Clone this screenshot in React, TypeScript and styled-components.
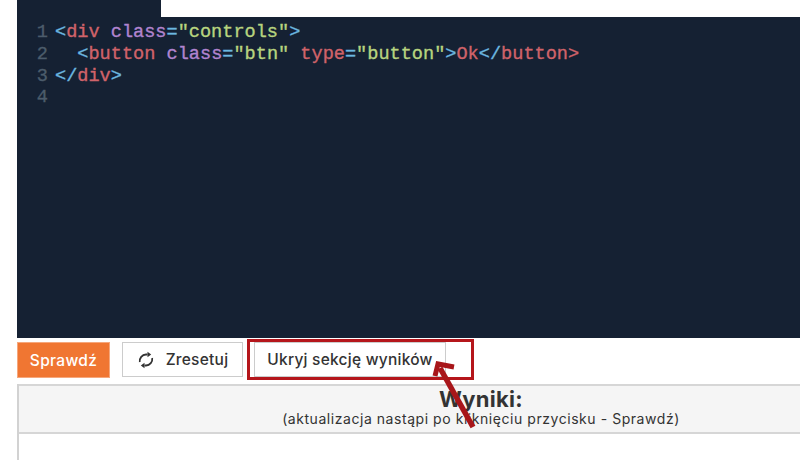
import styled, { createGlobalStyle } from 'styled-components';

const GlobalStyle = createGlobalStyle`
  html, body {
    margin: 0;
    padding: 0;
    background: #ffffff;
    overflow: hidden;
  }
`;

const Page = styled.div`
  position: relative;
  width: 800px;
  height: 460px;
  overflow: hidden;
  padding-left: 17px;
  box-sizing: border-box;
  font-family: "Inter", "Noto Sans", sans-serif;
`;

const Content = styled.div`
  width: 926px;
`;

const TabRow = styled.div`
  height: 17px;
`;

const Tab = styled.div`
  width: 144px;
  height: 17px;
  background: #152133;
`;

const Editor = styled.div`
  height: 321px;
  background: #152133;
  padding-top: 5px;
  box-sizing: border-box;
  font-family: "Liberation Mono", monospace;
  font-size: 18.58px;
  line-height: 21.8px;
  -webkit-text-stroke: 0.35px;
`;

const Line = styled.div`
  display: flex;
  height: 21.8px;
`;

const Gutter = styled.span`
  width: 38px;
  padding-right: 7px;
  box-sizing: border-box;
  text-align: right;
  color: #4c5c6b;
`;

const Code = styled.code`
  font: inherit;
  white-space: pre;
`;

const Tok = styled.span<{ $c: string }>`
  color: ${({ $c }) => $c};
`;

const Toolbar = styled.div`
  display: flex;
  align-items: flex-start;
  height: 46px;
  padding-top: 4px;
  box-sizing: border-box;
`;

const Primary = styled.button`
  width: 93px;
  height: 36px;
  margin-right: 12px;
  border: 1px solid #f6a77c;
  background: #f07632;
  color: #ffffff;
  font: 500 15.5px "Inter", sans-serif;
  letter-spacing: 0.3px;
  padding: 0;
`;

const Plain = styled.button<{ $w: number }>`
  display: flex;
  align-items: center;
  justify-content: center;
  gap: 11px;
  width: ${({ $w }) => $w}px;
  height: 35px;
  margin-right: 11px;
  border: 1px solid #cccccc;
  background: #ffffff;
  color: #333333;
  font: 450 15.5px "Inter", sans-serif;
  letter-spacing: 0.25px;
  padding: 0;
`;

const Results = styled.section`
  border-left: 2px solid #d2d2d2;
  height: 76px;
`;

const ResultsHeader = styled.header`
  height: 50px;
  box-sizing: border-box;
  border-top: 2px solid #d6d6d6;
  border-bottom: 2px solid #d6d6d6;
  background: #f5f5f5;
  text-align: center;
  color: #333333;
`;

const ResultsTitle = styled.h2`
  margin: 0;
  padding-top: 1px;
  font-size: 22px;
  line-height: 24px;
  font-weight: 700;
  letter-spacing: 0.3px;
`;

const ResultsNote = styled.div`
  font-size: 14px;
  line-height: 16px;
  letter-spacing: 0.55px;
`;

const Highlight = styled.div`
  position: absolute;
  left: 247px;
  top: 339px;
  width: 227px;
  height: 41px;
  box-sizing: border-box;
  border: 3px solid #b5161b;
`;

const Arrow = styled.svg`
  position: absolute;
  left: 430px;
  top: 355px;
`;

const C = { br: '#6cb8e0', tag: '#d0636a', attr: '#b184cf', str: '#b8d47f' };

const SyncIcon = () => (
  <svg width="18" height="18" viewBox="0 0 18 18" fill="none">
    <path d="M2.8 11 A6.5 6.5 0 0 1 9 3.5 H10.5" stroke="#333333" strokeWidth="1.8" />
    <path d="M10.5 .8 L14.2 3.5 L10.5 6.2 Z" fill="#333333" />
    <path d="M15.2 7 A6.5 6.5 0 0 1 9 14.5 H7.5" stroke="#333333" strokeWidth="1.8" />
    <path d="M7.5 11.8 L3.8 14.5 L7.5 17.2 Z" fill="#333333" />
  </svg>
);

export default function App() {
  return (
    <Page>
      <GlobalStyle />
      <Content>
        <TabRow>
          <Tab />
        </TabRow>
        <Editor>
          <Line>
            <Gutter>1</Gutter>
            <Code>
              <Tok $c={C.br}>&lt;</Tok>
              <Tok $c={C.tag}>div</Tok> <Tok $c={C.attr}>class</Tok>
              <Tok $c={C.br}>=</Tok>
              <Tok $c={C.str}>"controls"</Tok>
              <Tok $c={C.br}>&gt;</Tok>
            </Code>
          </Line>
          <Line>
            <Gutter>2</Gutter>
            <Code>
              {'  '}
              <Tok $c={C.br}>&lt;</Tok>
              <Tok $c={C.tag}>button</Tok> <Tok $c={C.attr}>class</Tok>
              <Tok $c={C.br}>=</Tok>
              <Tok $c={C.str}>"btn"</Tok> <Tok $c={C.tag}>type</Tok>
              <Tok $c={C.br}>=</Tok>
              <Tok $c={C.str}>"button"</Tok>
              <Tok $c={C.br}>&gt;</Tok>
              <Tok $c={C.tag}>Ok</Tok>
              <Tok $c={C.br}>&lt;/</Tok>
              <Tok $c={C.tag}>button&gt;</Tok>
            </Code>
          </Line>
          <Line>
            <Gutter>3</Gutter>
            <Code>
              <Tok $c={C.br}>&lt;/</Tok>
              <Tok $c={C.tag}>div</Tok>
              <Tok $c={C.br}>&gt;</Tok>
            </Code>
          </Line>
          <Line>
            <Gutter>4</Gutter>
          </Line>
        </Editor>
        <Toolbar>
          <Primary>Sprawdź</Primary>
          <Plain $w={121}>
            <SyncIcon />
            Zresetuj
          </Plain>
          <Plain $w={192}>Ukryj sekcję wyników</Plain>
        </Toolbar>
        <Results>
          <ResultsHeader>
            <ResultsTitle>Wyniki:</ResultsTitle>
            <ResultsNote>(aktualizacja nastąpi po kliknięciu przycisku - Sprawdź)</ResultsNote>
          </ResultsHeader>
        </Results>
      </Content>
      <Highlight />
      <Arrow width="50" height="80" viewBox="0 0 50 80" fill="none">
        <path d="M43 72 L10 13" stroke="#a8161a" strokeWidth="5.5" />
        <path d="M5 21 L8 9 L24 12" stroke="#a8161a" strokeWidth="5" />
      </Arrow>
    </Page>
  );
}
